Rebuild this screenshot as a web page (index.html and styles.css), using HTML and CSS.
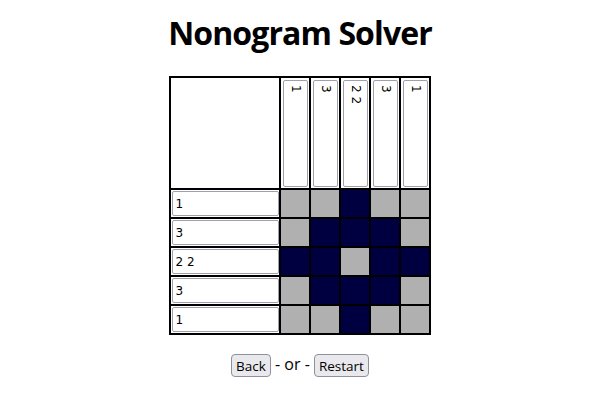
FILE: index.html
```html
<!DOCTYPE html>
<html>
<head>
<meta charset="utf-8">
<link rel="stylesheet" href="styles.css">
</head>
<body>
<h1 class="title">Nonogram Solver</h1>
<table class="board">
  <tr>
    <td class="corner"></td>
    <td class="col-cell"><div class="clue-col">1</div></td>
    <td class="col-cell"><div class="clue-col">3</div></td>
    <td class="col-cell"><div class="clue-col">2 2</div></td>
    <td class="col-cell"><div class="clue-col">3</div></td>
    <td class="col-cell"><div class="clue-col">1</div></td>
  </tr>
  <tr>
    <td class="row-cell"><input class="clue-row" type="text" value="1"></td>
    <td class="cell off"></td><td class="cell off"></td><td class="cell on"></td><td class="cell off"></td><td class="cell off"></td>
  </tr>
  <tr>
    <td class="row-cell"><input class="clue-row" type="text" value="3"></td>
    <td class="cell off"></td><td class="cell on"></td><td class="cell on"></td><td class="cell on"></td><td class="cell off"></td>
  </tr>
  <tr>
    <td class="row-cell"><input class="clue-row" type="text" value="2 2"></td>
    <td class="cell on"></td><td class="cell on"></td><td class="cell off"></td><td class="cell on"></td><td class="cell on"></td>
  </tr>
  <tr>
    <td class="row-cell"><input class="clue-row" type="text" value="3"></td>
    <td class="cell off"></td><td class="cell on"></td><td class="cell on"></td><td class="cell on"></td><td class="cell off"></td>
  </tr>
  <tr>
    <td class="row-cell"><input class="clue-row" type="text" value="1"></td>
    <td class="cell off"></td><td class="cell off"></td><td class="cell on"></td><td class="cell off"></td><td class="cell off"></td>
  </tr>
</table>
<div class="actions"><button class="btn" type="button">Back</button> - or - <button class="btn" type="button">Restart</button></div>
</body>
</html>
```
FILE: styles.css
```css
html, body {
  margin: 0;
  padding: 0;
  background: #ffffff;
}
body {
  font-family: "Open Sans", "DejaVu Sans", sans-serif;
  color: #000;
  text-align: center;
  padding-top: 14px;
}
.title {
  margin: 0 0 25px 0;
  font-size: 32px;
  line-height: 37px;
  font-weight: 700;
  letter-spacing: -0.9px;
}
.board {
  margin: 0 auto;
  border: 1px solid #000;
  border-spacing: 0;
}
.board td {
  border: 1px solid #000;
  padding: 0;
}
.corner {
  width: 108px;
  height: 110px;
}
.col-cell {
  width: 28px;
  height: 110px;
  vertical-align: middle;
}
.clue-col {
  writing-mode: vertical-rl;
  box-sizing: border-box;
  width: 25px;
  height: 107px;
  margin: 0 auto;
  border: 1px solid #a0a0ac;
  border-radius: 2px;
  font-family: "DejaVu Sans", sans-serif;
  font-size: 12px;
  line-height: 23px;
  text-align: left;
  padding-top: 4px;
  color: #000;
}
.row-cell {
  height: 27px;
  vertical-align: middle;
}
.clue-row {
  display: block;
  box-sizing: border-box;
  width: 107px;
  height: 25px;
  margin: 0 auto;
  border: 1px solid #a0a0ac;
  border-radius: 2px;
  padding: 0 3px;
  font-family: "DejaVu Sans", sans-serif;
  font-size: 12px;
  color: #000;
  background: #fff;
  outline: none;
}
.cell {
  width: 28px;
  height: 27px;
}
.cell.off { background: #b0b0b0; }
.cell.on { background: #000040; }
.actions {
  margin-top: 18px;
  font-size: 16px;
  line-height: 23px;
}
.btn {
  box-sizing: border-box;
  height: 23px;
  padding: 0 4px;
  border: 1px solid #8f8f9d;
  border-radius: 4px;
  background: #e9e9ed;
  font-family: "Open Sans", "DejaVu Sans", sans-serif;
  font-size: 13.5px;
  color: #000;
  vertical-align: middle;
}
```
